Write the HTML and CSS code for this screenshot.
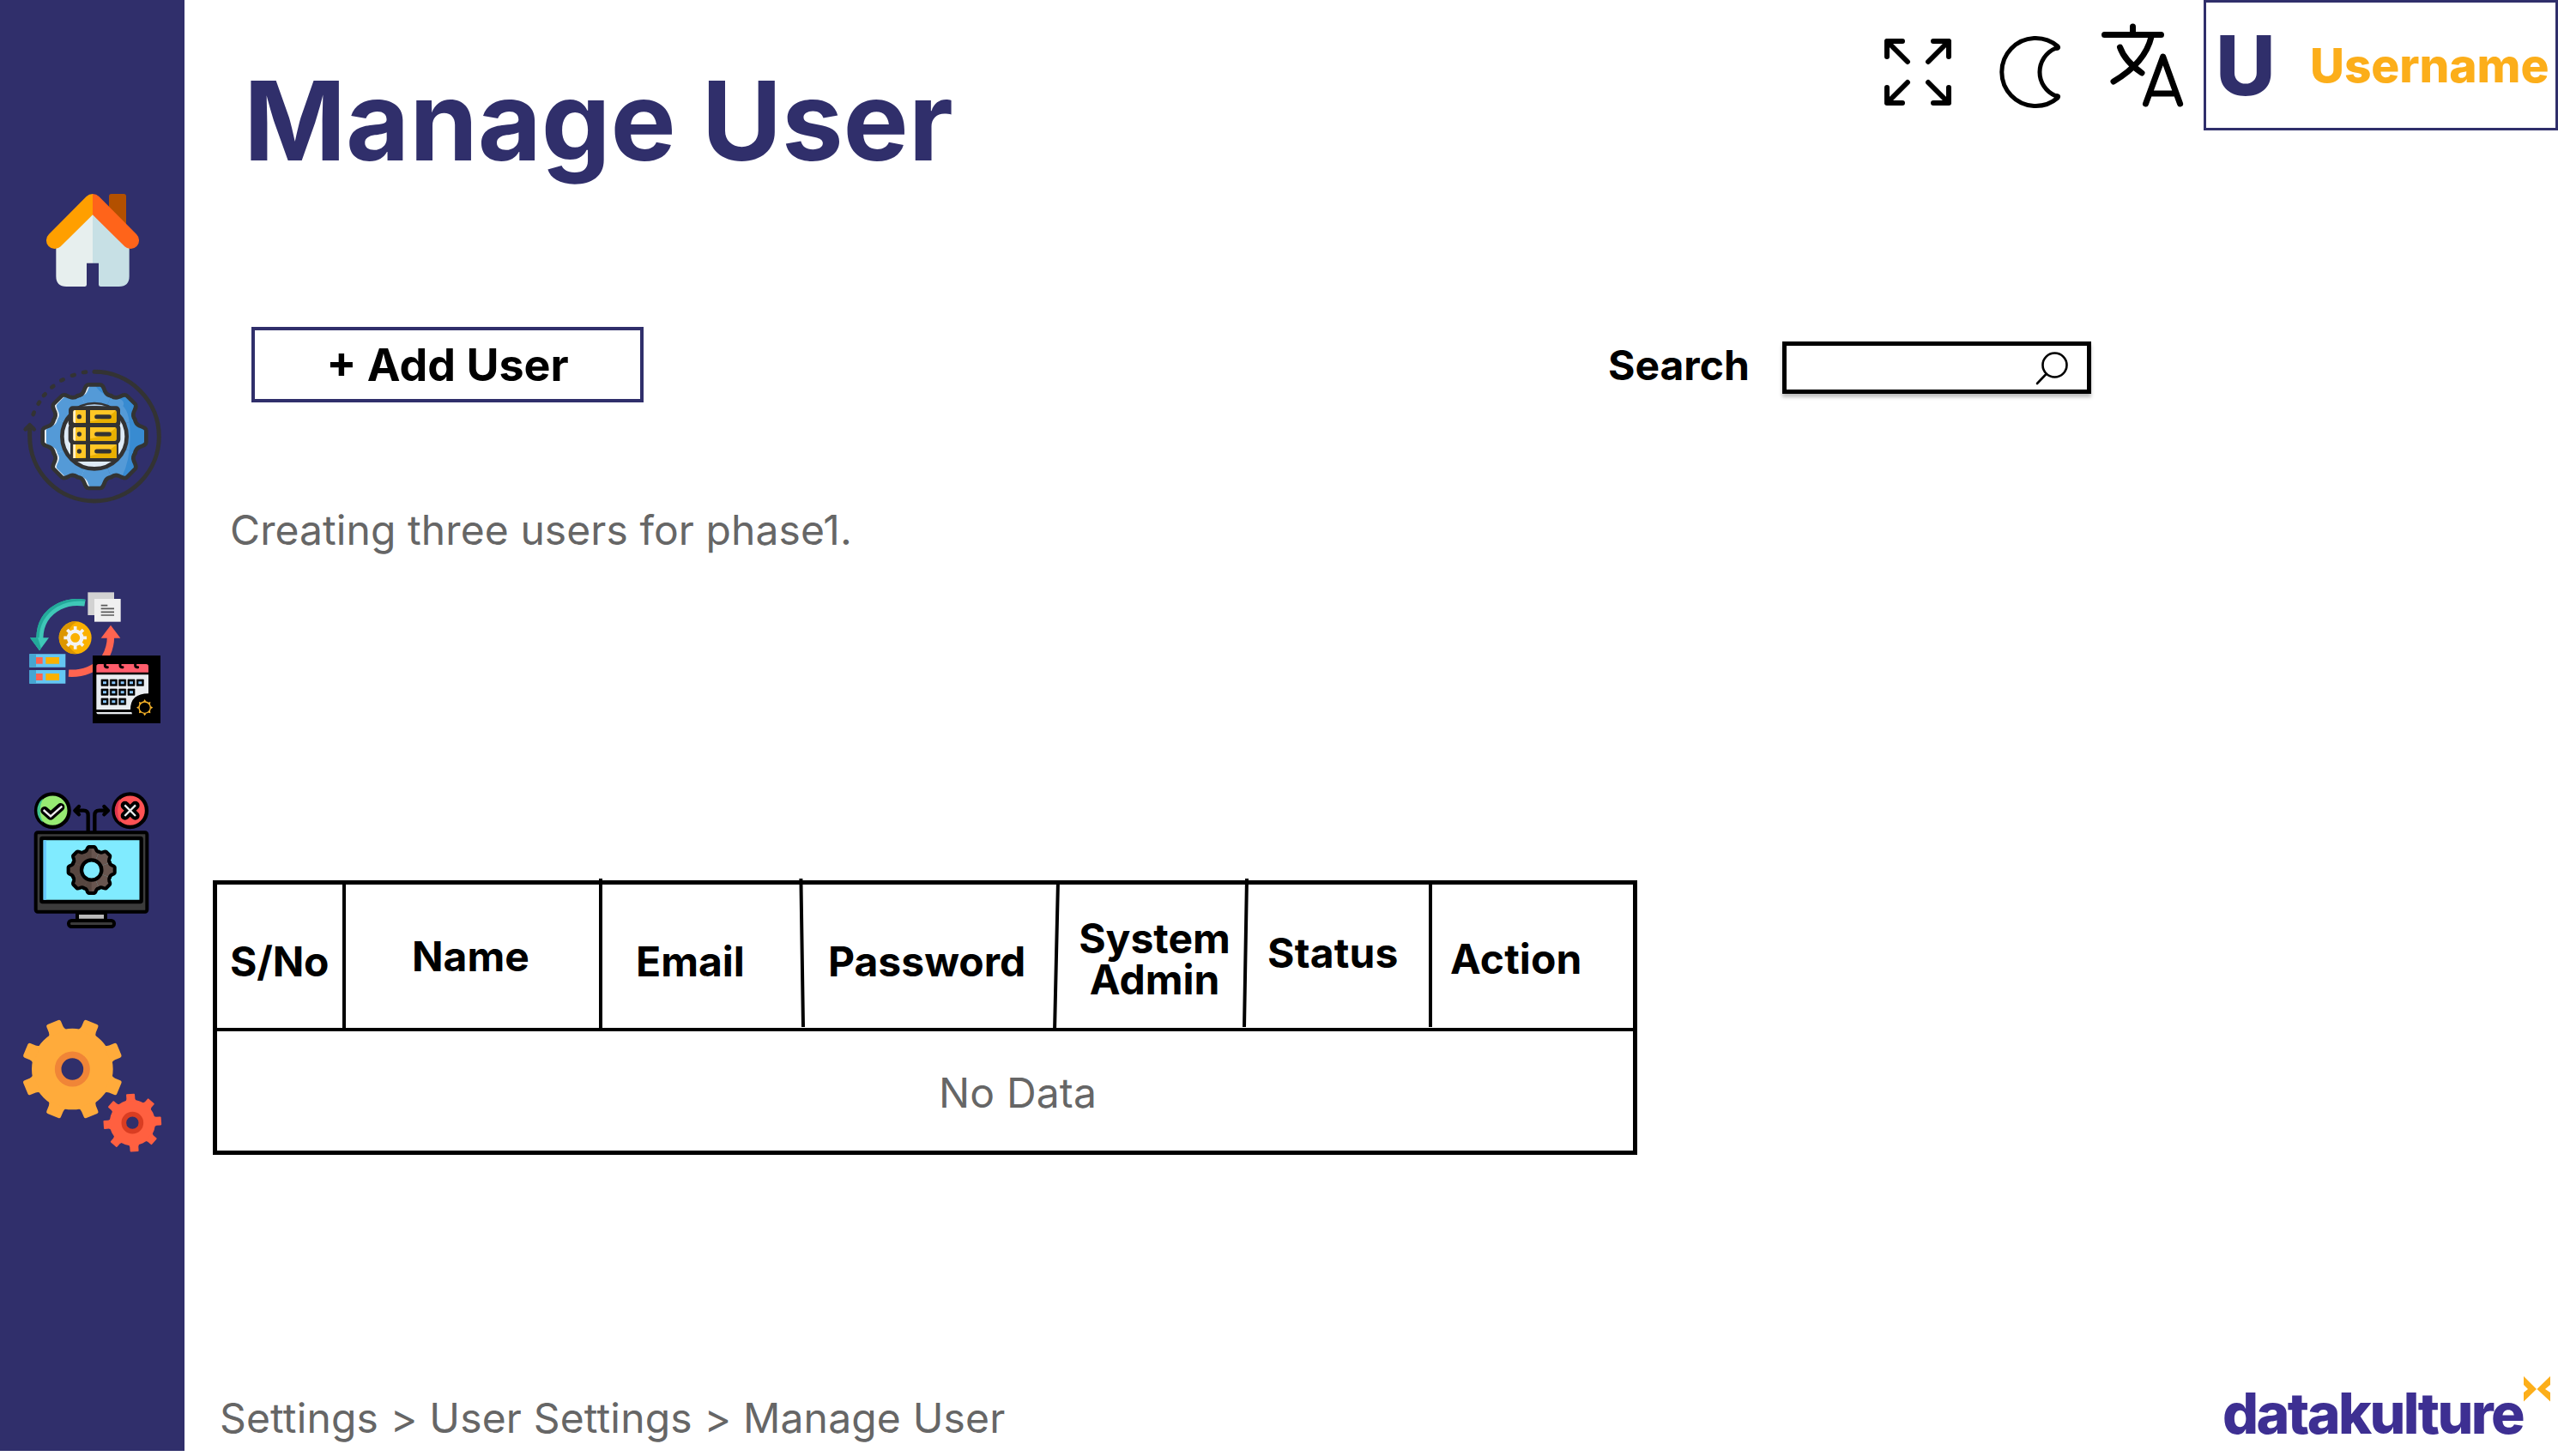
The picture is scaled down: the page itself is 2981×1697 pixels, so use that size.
FILE: index.html
```html
<!DOCTYPE html>
<html lang="en">
<head>
<meta charset="utf-8">
<title>Manage User</title>
<link rel="stylesheet" href="styles.css">
</head>
<body>
<nav class="sidebar">
  <a class="nav-item nav-home" aria-label="Home">
    <svg viewBox="0 0 645 480" width="215" height="160">
      <path d="M381 86q0-8 8-8h44q8 0 8 8v110l-60-60z" fill="#b35000"/>
      <path d="M324 140 196 262V366q0 36 36 36h64q7 0 7-7V320h21z" fill="#e7efee"/>
      <path d="M324 140 452 262V366q0 36-36 36h-64q-7 0-7-7V320h-21z" fill="#c7e0e5"/>
      <path d="M324 78q-13 0-22 9L171 219a29 29 0 0 0 41 43L324 151z" fill="#ff9f00"/>
      <path d="M324 78q13 0 22 9L477 219a29 29 0 0 1-41 43L324 151z" fill="#ff641a"/>
    </svg>
  </a>
  <a class="nav-item nav-data" aria-label="Data processing">
    <svg viewBox="0 0 645 600" width="215" height="200">
      <defs>
        <path id="wedge" d="M0 0-59-142Q-43-144-37-158C-32-170-30-181-20-181H20C30-181 32-170 37-158Q43-144 59-142Z"/>
        <path id="rim" d="M-59-142Q-43-144-37-158C-32-170-30-181-20-181H20C30-181 32-170 37-158Q43-144 59-142"/>
        <clipPath id="hub"><circle cx="330" cy="296" r="108"/></clipPath>
        <g id="gear-fill">
          <use href="#wedge"/><use href="#wedge" transform="rotate(45)"/><use href="#wedge" transform="rotate(90)"/><use href="#wedge" transform="rotate(135)"/><use href="#wedge" transform="rotate(180)"/><use href="#wedge" transform="rotate(225)"/><use href="#wedge" transform="rotate(270)"/><use href="#wedge" transform="rotate(315)"/>
        </g>
        <g id="gear-rim">
          <use href="#rim"/><use href="#rim" transform="rotate(45)"/><use href="#rim" transform="rotate(90)"/><use href="#rim" transform="rotate(135)"/><use href="#rim" transform="rotate(180)"/><use href="#rim" transform="rotate(225)"/><use href="#rim" transform="rotate(270)"/><use href="#rim" transform="rotate(315)"/>
        </g>
        <clipPath id="gear-edge"><path d="M330 100H530V490H350q30-40 75-50 30-60 30-144T430 190Q440 170 410 162 350 150 335 120z"/></clipPath>
        <clipPath id="gear-left"><path d="M140 100H330V490H140z"/></clipPath>
      </defs>
      <g fill="none" stroke="#333" stroke-width="15" stroke-linecap="round">
        <path d="M330 70A226 226 0 1 1 104 296V262"/>
        <path d="M89 271 104 256 119 271" stroke-linejoin="round" stroke-width="14"/>
        <path d="M116 219 119 212M134 182 138 176M153 153 158 148M181 124 187 120M214 100 221 97M252 83 260 81M291 72 300 71" stroke-width="14"/>
      </g>
      <g transform="translate(330 296)" fill="#549ad7" stroke="#549ad7" stroke-width="1"><use href="#gear-fill"/></g>
      <g clip-path="url(#gear-left)">
        <g transform="translate(330 296)" fill="#f1f5f9"><use href="#gear-fill"/></g>
        <g transform="translate(343 296)" fill="#549ad7" stroke="#549ad7" stroke-width="1"><use href="#gear-fill"/></g>
      </g>
      <g clip-path="url(#gear-edge)"><g transform="translate(330 296)" fill="#388bd1"><use href="#gear-fill"/></g></g>
      <g transform="translate(330 296)" fill="none" stroke="#333" stroke-width="14" stroke-linecap="round" stroke-linejoin="round"><use href="#gear-rim"/></g>
      <circle cx="330" cy="296" r="113" fill="#deebf7" stroke="#333" stroke-width="14"/>
      <path d="M280 194q50-20 100 0z" fill="#b5d3ef"/>
      <g clip-path="url(#hub)">
        <rect x="246" y="197" width="168" height="62" rx="10" fill="#333" stroke="#333" stroke-width="14"/>
        <rect x="246" y="257" width="168" height="60" rx="10" fill="#333" stroke="#333" stroke-width="14"/>
        <path d="M246 317H414V384H246z" fill="#333"/>
      </g>
      <rect x="240" y="190" width="180" height="60" rx="14" fill="#333"/>
      <g fill="#ffc726">
        <path d="M262 204h38v45h-38q-6 0-6-6v-33q0-6 6-6zM315 204h86q6 0 6 6v33q0 6-6 6h-86zM262 264h38v47h-38q-6 0-6-6v-35q0-6 6-6zM315 264h86q6 0 6 6v35q0 6-6 6h-86zM256 324h44v48h-44zM315 324h92v48h-92z"/>
      </g>
      <path d="M315 244q70-14 88-38 4 2 4 6v31q0 6-6 6h-86zM315 304q70-14 88-38 4 2 4 6v33q0 6-6 6h-86zM315 364q70-14 92-40v48h-92zM266 249q20 0 34-3v3zM266 311q20 0 34-3v3zM266 372q20 0 34-3v3z" fill="#e9b000"/>
      <path d="M256 210q0-6 8-6v45q-8 0-8-6zM256 270q0-6 8-6v47q-8 0-8-6zM256 324h8v48h-8z" fill="#fff1cc"/>
      <g fill="#333"><circle cx="277" cy="227" r="8"/><circle cx="277" cy="288" r="8"/><circle cx="277" cy="348" r="8"/></g>
      <path d="M338 227H382M338 288H382M338 348H382" stroke="#333" stroke-width="15" stroke-linecap="round"/>
    </svg>
  </a>
  <a class="nav-item nav-schedule" aria-label="Data schedule">
    <svg viewBox="0 0 645 600" width="215" height="200">
      <path d="M297 98Q248 90 208 110 140 145 139 222" fill="none" stroke="#3fc7b7" stroke-width="24"/>
      <path d="M297 86Q240 78 195 103 127 140 127 222H137Q138 150 200 112 240 88 297 92z" fill="#23a99a"/>
      <path d="M105 220H171L138 265z" fill="#3fc7b7"/>
      <path d="M105 220H132L144 257 138 265z" fill="#23a99a"/>
      <path d="M387 215Q387 262 360 300 310 348 240 344" fill="none" stroke="#ff6450" stroke-width="25"/>
      <path d="M353 221 387 176 421 221z" fill="#ff6450"/>
      <path d="M307 61H399V141H307z" fill="#d2d2d2"/>
      <path d="M330 84H422V164H330z" fill="#f0f0f0"/>
      <path d="M353 107H376M353 118H399M353 130H399M353 141H399" fill="none" stroke="#5a5a5a" stroke-width="5"/>
      <circle cx="263" cy="220" r="57" fill="#fbb100"/>
      <path d="M263 163a57 57 0 0 0 0 114l5-1a64 64 0 0 1 0-112z" fill="#dc9600"/>
      <circle cx="263" cy="220" r="23" fill="#fbb100" stroke="#f3f3f3" stroke-width="13"/>
      <path d="M263 180V194M263 246V260M223 220H237M289 220H303M235 192 245 202M281 238 291 248M291 192 281 202M245 238 235 248" stroke="#f3f3f3" stroke-width="11"/>
      <path d="M103 277H229V323H103zM103 333H229V380H103z" fill="#64c6f2"/>
      <path d="M103 277H126V323H103zM103 333H126V380H103z" fill="#46a6d2"/>
      <path d="M126 288H149V311H126zM126 345H149V369H126z" fill="#ff6450"/>
      <path d="M160 288H207V311H160zM160 345H207V369H160z" fill="#fbb100"/>
      <path d="M324 282H561V519H324z"/>
      <path d="M337 341V320q0-8 8-8H511q8 0 8 8V341z" fill="#ff5d6c"/>
      <path d="M367 310V317q0 7 9 6M420 310V317q0 7 9 6M473 310V317q0 7 9 6" fill="none" stroke="#000" stroke-width="9" stroke-linecap="round"/>
      <path d="M337 349H519V415Q456 415 456 471H337zM337 480H460L462 487H345q-8 0-8-7z" fill="#e9edf1"/>
      <path d="M354 366h24v22h-24zM385 366h24v22h-24zM416 366h24v22h-24zM447 366h24v22h-24zM478 366h24v22h-24zM354 399h24v22h-24zM385 399h24v22h-24zM416 399h24v22h-24zM447 399h24v22h-24zM354 432h24v22h-24zM385 432h24v22h-24zM416 432h24v22h-24z" stroke="#000" stroke-width="2" stroke-linejoin="round"/>
      <path d="M366 373v9M397 373v9M428 373v9M459 373v9M490 373v9M366 406v9M397 406v9M428 406v9M459 406v9M366 439v9M397 439v9M428 439v9" stroke="#86c4f7" stroke-width="12"/>
      <circle cx="506" cy="464" r="20" fill="none" stroke="#fcb72b" stroke-width="4"/>
      <path d="M501 443 506 435 511 443zM501 485 506 493 511 485zM485 459 477 464 485 469zM527 459 535 464 527 469zM487 453 486 444 496 447zM525 453 526 444 516 447zM487 475 486 484 496 481zM525 475 526 484 516 481z" fill="#fcb72b"/>
    </svg>
  </a>
  <a class="nav-item nav-rules" aria-label="Validation rules">
    <svg viewBox="0 0 645 600" width="215" height="200">
      <circle cx="184" cy="134" r="58" fill="#97eb72" stroke="#000" stroke-width="13"/>
      <path d="M150 92a54 54 0 0 0 0 84q-20-42 0-84z" fill="#3fc790"/>
      <path d="M156 134 177 153 212 122" fill="none" stroke="#000" stroke-width="28" stroke-linecap="round" stroke-linejoin="round"/>
      <path d="M152 132 177 154 217 119" fill="none" stroke="#eee" stroke-width="7"/>
      <circle cx="455" cy="134" r="58" fill="#ff5254" stroke="#000" stroke-width="13"/>
      <path d="M421 92a54 54 0 0 0 0 84q-20-42 0-84z" fill="#e0364f"/>
      <path d="M437 116 473 152M473 116 437 152" stroke="#000" stroke-width="30" stroke-linecap="round"/>
      <path d="M436 115 474 153M474 115 436 153" stroke="#eee" stroke-width="7"/>
      <path d="M308 206V150Q308 134 292 134H264M276 120 262 134 276 148M331 206V150Q331 134 347 134H376M364 120 378 134 364 148" fill="none" stroke="#000" stroke-width="13" stroke-linecap="round" stroke-linejoin="round"/>
      <rect x="125" y="211" width="389" height="277" rx="7" fill="#3b3b3b" stroke="#000" stroke-width="12"/>
      <rect x="145" y="231" width="349" height="222" rx="3" fill="#80ebff" stroke="#000" stroke-width="13"/>
      <path d="M152 238H162V446H152z" fill="#68c9ff"/>
      <path d="M270 492H369V518H270z" fill="#bbb" stroke="#000" stroke-width="12"/>
      <rect x="240" y="519" width="159" height="21" rx="10" fill="#3b3b3b" stroke="#000" stroke-width="12"/>
      <g transform="translate(320 342) scale(.448)">
        <g fill="#68554f" stroke="#68554f" stroke-width="1"><use href="#gear-fill"/></g>
        <g clip-path="url(#half)" fill="#574640"><use href="#gear-fill"/></g>
        <g fill="none" stroke="#000" stroke-width="27" stroke-linecap="round" stroke-linejoin="round"><use href="#gear-rim"/></g>
      </g>
      <defs><clipPath id="half"><path d="M-200-200H0V200H-200z"/></clipPath></defs>
      <circle cx="320" cy="342" r="35" fill="#80ebff" stroke="#000" stroke-width="13"/>
    </svg>
  </a>
  <a class="nav-item nav-settings" aria-label="Settings">
    <svg viewBox="0 0 645 600" width="215" height="200">
      <defs>
        <path id="cog-l" d="M-34-134Q-27-142-27-150V-170Q-27-177-20-177H20Q27-177 27-170V-150Q27-142 34-134z"/>
        <path id="cog-s" d="M-18-76-15-84V-98Q-15-101-12-101H12Q15-101 15-98V-84L18-76z"/>
      </defs>
      <g transform="translate(253 228) rotate(22.5)" fill="#ffab3b">
        <circle r="142"/>
        <use href="#cog-l"/><use href="#cog-l" transform="rotate(45)"/><use href="#cog-l" transform="rotate(90)"/><use href="#cog-l" transform="rotate(135)"/><use href="#cog-l" transform="rotate(180)"/><use href="#cog-l" transform="rotate(225)"/><use href="#cog-l" transform="rotate(270)"/><use href="#cog-l" transform="rotate(315)"/>
      </g>
      <circle cx="253" cy="228" r="50" fill="#302f6b" stroke="#f08537" stroke-width="23"/>
      <g transform="translate(463 416) rotate(-4)" fill="#ff6040">
        <circle r="80"/>
        <use href="#cog-s"/><use href="#cog-s" transform="rotate(45)"/><use href="#cog-s" transform="rotate(90)"/><use href="#cog-s" transform="rotate(135)"/><use href="#cog-s" transform="rotate(180)"/><use href="#cog-s" transform="rotate(225)"/><use href="#cog-s" transform="rotate(270)"/><use href="#cog-s" transform="rotate(315)"/>
      </g>
      <circle cx="463" cy="416" r="30" fill="#302f6b" stroke="#d93d22" stroke-width="17"/>
    </svg>
  </a>
</nav>

<main class="page">
  <header class="topbar">
    <h1 class="title">Manage User</h1>
    <div class="actions">
      <svg class="icon-expand" viewBox="0 0 78 78" width="78" height="78">
        <path d="M27 27 3 3M3 21V3H21M51 27 75 3M57 3H75V21M27 51 3 75M3 57V75H21M51 51 75 75M57 75H75V57"/>
      </svg>
      <svg class="icon-moon" viewBox="0 0 76 88" width="76" height="88">
        <path d="M69 14A39.5 39.5 0 1 0 69 74Q71 71 66 71.500A30 30 0 0 1 66 16.500Q71 17 69 14z"/>
      </svg>
      <svg class="icon-translate" viewBox="0 0 98 100" width="98" height="100">
        <path d="M4.500 14.500H70.500M37.500 5V14M59 17Q52 47 15 69M22.500 29Q28 45 48 59M52.500 95 72.700 40 92.600 95M59 83H87"/>
      </svg>
      <div class="user-box">
        <span class="user-initial">U</span>
        <span class="user-name">Username</span>
      </div>
    </div>
  </header>

  <section class="toolbar">
    <button class="add-user">+ Add User</button>
    <label class="search">
      <span class="search-label">Search</span>
      <span class="search-field">
        <svg viewBox="0 0 40 40" width="40" height="40"><circle cx="23.500" cy="16.500" r="14"/><path d="M13.500 27 3 38"/></svg>
      </span>
    </label>
  </section>

  <p class="hint">Creating three users for phase1.</p>

  <section class="table">
    <div class="table-head">
      <span class="col col-sno">S/No</span>
      <span class="col col-name">Name</span>
      <span class="col col-email">Email</span>
      <span class="col col-password">Password</span>
      <span class="col col-admin">System Admin</span>
      <span class="col col-status">Status</span>
      <span class="col col-action">Action</span>
    </div>
    <div class="table-empty">No Data</div>
    <svg class="dividers" viewBox="248 1024 1660 180" width="1660" height="180">
      <path d="M401 1028V1200M700 1024V1200M933.400 1024 936 1197M1233 1026 1229 1202M1453 1024 1450 1197M1667 1028V1197"/>
    </svg>
  </section>

  <footer class="footer">
    <p class="breadcrumb">Settings &gt; User Settings &gt; Manage User</p>
    <div class="brand">
      <span class="brand-name">datakulture</span>
      <svg class="brand-mark" viewBox="0 0 31 30" width="31" height="30"><path d="M0 0 15 15 0 29.500V19L5 15 0 10zM31 0 15.500 15 31 29.500V19L25 15 31 10z"/></svg>
    </div>
  </footer>
</main>
</body>
</html>
```
FILE: styles.css
```css
* { box-sizing: border-box; }

body {
  margin: 0;
  display: flex;
  align-items: flex-start;
  width: 2981px;
  height: 1697px;
  overflow: hidden;
  background: #fff;
  color: #000;
  font-family: Inter, "Liberation Sans", sans-serif;
}

h1, p { margin: 0; }

/* Sidebar */
.sidebar {
  flex: none;
  display: flex;
  flex-direction: column;
  width: 215px;
  height: 1691px;
  padding-top: 200px;
  background: #302f6b;
}
.nav-item { display: block; height: 200px; }
.nav-item svg { display: block; }
.nav-home { height: 160px; margin-bottom: 50px; }
.nav-data { margin-bottom: 60px; }
.nav-schedule { margin-bottom: 30px; }
.nav-rules { margin-bottom: 70px; }

/* Page column */
.page {
  flex: 1;
  display: flex;
  flex-direction: column;
  height: 1697px;
}

.topbar {
  display: flex;
  justify-content: space-between;
  align-items: flex-start;
  height: 381px;
}
.title {
  padding: 77px 0 0 69px;
  color: #302f6b;
  font-size: 128px;
  font-weight: 700;
  line-height: 128px;
  letter-spacing: -.2px;
  white-space: nowrap;
}
.actions { display: flex; align-items: flex-start; }
.actions svg {
  fill: none;
  stroke: #000;
  stroke-linecap: round;
  stroke-linejoin: round;
}
.icon-expand { margin: 45px 55px 0 0; stroke-width: 6; }
.icon-moon { margin: 40px 43px 0 0; stroke-width: 5; }
.icon-translate { margin: 26px 22px 0 0; stroke-width: 7; }
.user-box {
  display: flex;
  align-items: flex-start;
  width: 413px;
  height: 152px;
  border: 3px solid #302f6b;
  font-weight: 800;
}
.user-initial {
  width: 121px;
  padding: 25px 0 0 11px;
  color: #302f6b;
  font-size: 96px;
  line-height: 96px;
}
.user-name {
  padding-top: 46px;
  color: #fcae1a;
  font-size: 55px;
  line-height: 55px;
  letter-spacing: -.1px;
}

/* Toolbar */
.toolbar {
  display: flex;
  align-items: flex-start;
  height: 212px;
  padding-left: 78px;
}
.add-user {
  width: 457px;
  height: 88px;
  margin: 0;
  padding: 1px 0 0;
  border: 4px solid #302f6b;
  background: #fff;
  color: #000;
  font: 700 52px/79px Inter, "Liberation Sans", sans-serif;
}
.search {
  display: flex;
  margin: 17px 0 0 1124px;
}
.search-label {
  width: 203px;
  padding-top: 4px;
  font-size: 48px;
  font-weight: 700;
  line-height: 48px;
}
.search-field {
  display: flex;
  justify-content: flex-end;
  width: 360px;
  height: 61px;
  padding: 6px 21px 0 0;
  border: 5px solid #000;
  background: #fff;
  box-shadow: 0 4px 4px rgba(0, 0, 0, .25);
}
.search-field svg {
  fill: none;
  stroke: #000;
  stroke-width: 2.6;
  stroke-linecap: round;
}

.hint {
  height: 433px;
  padding: 1px 0 0 53px;
  color: #666;
  font-size: 48px;
  line-height: 48px;
  letter-spacing: .08px;
}

/* Table */
.table {
  position: relative;
  width: 1660px;
  height: 320px;
  margin-left: 33px;
  border: 5px solid #000;
}
.table-head {
  display: grid;
  grid-template-columns: 148px 299px 235px 296px 221px 215px 236px;
  height: 171px;
  border-bottom: 4px solid #000;
  font-size: 48px;
  font-weight: 700;
  line-height: 48px;
}
.col-sno { padding: 66px 0 0 15px; letter-spacing: -.2px; }
.col-name { padding: 60px 0 0 79px; }
.col-email { padding: 66px 0 0 41px; }
.col-password { padding: 66px 0 0 30px; }
.col-admin { padding: 39px 17px 0 25px; text-align: center; }
.col-status { padding: 56px 0 0 25px; letter-spacing: .2px; }
.col-action { padding: 63px 0 0 23px; letter-spacing: .1px; }
.table-empty {
  padding: 48px 0 0 841px;
  color: #666;
  font-size: 48px;
  line-height: 48px;
  letter-spacing: .15px;
}
.dividers {
  position: absolute;
  left: -5px;
  top: -7px;
  fill: none;
  stroke: #000;
  stroke-width: 4;
}

/* Footer */
.footer {
  display: flex;
  justify-content: space-between;
  align-items: flex-start;
  margin-top: 258px;
  padding: 0 9px 0 41px;
}
.breadcrumb {
  padding-top: 25px;
  color: #666;
  font-size: 48px;
  line-height: 48px;
  letter-spacing: .16px;
}
.brand { display: flex; align-items: flex-start; }
.brand-name {
  width: 351px;
  padding-top: 10px;
  color: #3d2f92;
  font-size: 66px;
  font-weight: 800;
  line-height: 66px;
  letter-spacing: -2.6px;
  white-space: nowrap;
}
.brand-mark { fill: #fcae1a; }
```
